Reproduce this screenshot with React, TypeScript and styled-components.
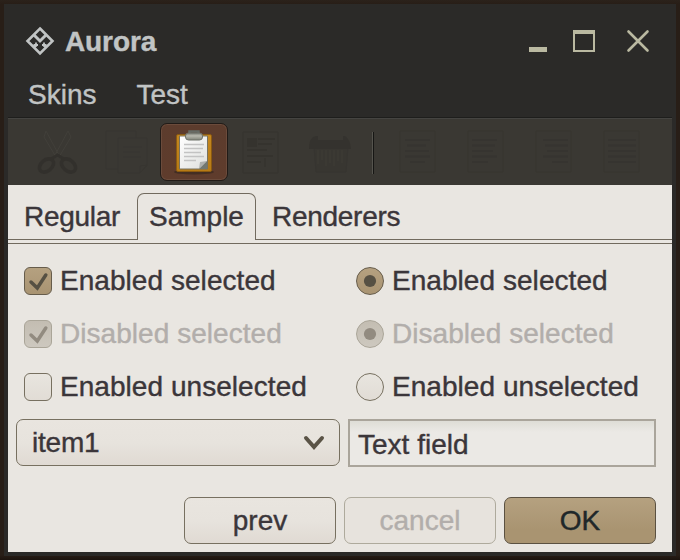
import React from 'react';
import styled, { createGlobalStyle, css } from 'styled-components';

const GlobalStyle = createGlobalStyle`
  * { box-sizing: border-box; }
  body { margin: 0; background: #2a1f19; }
`;

const Window = styled.div`
  width: 680px;
  height: 560px;
  overflow: hidden;
  display: flex;
  flex-direction: column;
  padding: 4px;
  background: linear-gradient(#2b221b, #281e17 4px, #281e17 555px, #1c130e);
  font: 28px/32px "Liberation Sans", Arial, sans-serif;
  color: #3b363a;
  -webkit-text-stroke: 0.4px currentColor;
`;

const Frame = styled.div`
  flex: 1;
  display: flex;
  flex-direction: column;
  padding: 0 4px 4px;
  background: #2b2a28;
`;

const TitleBar = styled.header`
  height: 74px;
  display: flex;
  align-items: center;
  padding: 0 20px 0 17px;
  color: #c1c4c4;
`;

const Title = styled.h1`
  flex: 1;
  margin: 1px 0 0 10px;
  font-size: 28px;
  line-height: 32px;
  letter-spacing: -0.1px;
`;

const WindowButtons = styled.svg`
  width: 126px;
  height: 32px;
  display: block;
`;

const MenuBar = styled.nav`
  height: 39px;
  display: flex;
  gap: 40px;
  padding: 1px 0 0 20px;
  color: #c1c4c4;
`;

const MenuItem = styled.span`
  white-space: nowrap;
`;

const Toolbar = styled.div`
  height: 68px;
  padding: 4px 16px 0;
  display: flex;
  align-items: center;
  border-top: 1px solid #1e1e1c;
  box-shadow: inset 0 1px #454441;
  background: #3a3833;
`;

const Tool = styled.button<{ $active?: boolean }>`
  flex: 0 0 68px;
  height: 58px;
  margin-top: -4px;
  padding: 0;
  display: flex;
  align-items: center;
  justify-content: center;
  background: none;
  border: 1px solid transparent;
  border-radius: 7px;
  svg {
    display: block;
    width: 48px;
    height: 48px;
    flex: none;
    opacity: ${p => (p.$active ? 1 : 0.7)};
  }
  ${p => p.$active && css`
    background: linear-gradient(#5c3c2d, #5f3c2c);
    border-color: #211b17;
    box-shadow: inset 0 0 0 1px #6b4b3b;
  `}
`;

const Separator = styled.div`
  flex: 0 0 2px;
  height: 42px;
  margin: -1px 10px 0 8px;
  background: linear-gradient(90deg, #55544e 50%, #161614 50%);
`;

const Content = styled.main`
  flex: 1;
  display: flex;
  flex-direction: column;
  background: #e9e6e1;
`;

const Tabs = styled.div`
  height: 59px;
  display: flex;
  padding-top: 8px;
  border-bottom: 1px solid #716a5e;
`;

const Tab = styled.div<{ $width: number; $selected?: boolean; $grow?: boolean }>`
  width: ${p => p.$width}px;
  flex: ${p => (p.$grow ? '1' : 'none')};
  height: 47px;
  padding: ${p => (p.$selected ? '7px 0 0 11px' : '8px 0 0 16px')};
  white-space: nowrap;
  letter-spacing: ${p => (p.$selected ? '0' : '-0.28px')};
  border: 0 solid #716a5e;
  border-width: ${p => (p.$selected ? '1px 1px 0' : '0 0 1px')};
  border-radius: ${p => (p.$selected ? '7px 7px 0 0' : '0')};
`;

const Options = styled.div`
  display: grid;
  grid-template-columns: 332px 1fr;
  grid-auto-rows: 53px;
  padding: 10px 0 0 16px;
  height: 175px;
`;

const Option = styled.label<{ $disabled?: boolean }>`
  display: flex;
  align-items: center;
  gap: 8px;
  white-space: nowrap;
  letter-spacing: 0.05px;
  color: ${p => (p.$disabled ? '#b2aeab' : 'inherit')};
`;

const Mark = styled.span<{ $round?: boolean; $state: State }>`
  width: 28px;
  height: 28px;
  display: flex;
  border: 1px solid;
  border-radius: ${p => (p.$round ? '50%' : '6px')};
  ${p => p.$state === 'selected' && css`
    color: #565043;
    border-color: #665c4b;
    background: linear-gradient(#b5a180, #a99472);
  `}
  ${p => p.$state === 'disabled' && css`
    color: #928b80;
    border-color: #aaa598;
    background: linear-gradient(#c3bdb2, #cdc8bf);
  `}
  ${p => p.$state === 'unselected' && css`
    border-color: #777060;
    background: linear-gradient(#e8e5df, #e1dcd5);
  `}
  svg { display: block; width: 26px; height: 26px; }
`;

const Fields = styled.div`
  display: flex;
  gap: 8px;
  padding: 0 16px 0 8px;
`;

const Combo = styled.div`
  width: 324px;
  height: 47px;
  display: flex;
  align-items: center;
  justify-content: space-between;
  padding: 0 14px 0 15px;
  letter-spacing: -0.2px;
  border: 1px solid #777060;
  border-radius: 7px;
  background: linear-gradient(#e9e5df, #e7e3dd 50%, #e0dad3);
  svg { display: block; }
`;

const TextField = styled.div`
  flex: 1;
  height: 48px;
  padding: 8px 0 0 8px;
  border: 2px solid #aaa59b;
  background: linear-gradient(#deddd6, #ebe9e5 11px);
`;

const Buttons = styled.footer`
  margin-top: 30px;
  padding-right: 16px;
  display: flex;
  justify-content: flex-end;
  gap: 8px;
`;

const Button = styled.button<{ $primary?: boolean }>`
  width: 152px;
  height: 47px;
  padding: 0;
  font: inherit;
  -webkit-text-stroke: inherit;
  color: #3b363a;
  border: 1px solid #777060;
  border-radius: 7px;
  background: linear-gradient(#e9e5df, #e7e3dd 50%, #e0dad3);
  &:disabled {
    color: #b2aeab;
    border-color: #aeaa9c;
    background: #e7e3dd;
  }
  ${p => p.$primary && css`
    color: #202729;
    border-color: #5b5141;
    background: linear-gradient(#b5a180, #a99471 70%);
  `}
`;

type State = 'selected' | 'disabled' | 'unselected';

const Logo = () => (
  <svg width="30" height="30" viewBox="0 0 30 30" fill="none" stroke="#c1c4c4">
    <path d="M15 2.5 27.5 15 15 27.5 2.5 15Z" strokeWidth="2.6" />
    <path d="m9 9 6 6 6-6" strokeWidth="3" />
    <path d="m9 21 2.2-2.2M21 21l-2.2-2.2" strokeWidth="3" />
    <path d="M11 16.5v4M19 16.5v4M8.5 19H13M17 19h4.5" strokeWidth="1.8" />
  </svg>
);

const Scissors = () => (
  <svg viewBox="0 0 48 48" fill="none" stroke="#302e2a">
    <path d="m12 3 14 26M34 3 20 29M12 3l-2 6 12 20M34 3l3 6-12 20" stroke="#45433d" />
    <ellipse cx="12.500" cy="37.500" rx="8" ry="5.500" strokeWidth="3.6" transform="rotate(-40 12.500 37.500)" />
    <ellipse cx="34.500" cy="37.500" rx="8" ry="5.500" strokeWidth="3.6" transform="rotate(40 34.500 37.500)" />
    <path d="m17 31 6.500-4 6.500 4" strokeWidth="3" />
  </svg>
);

const Copy = () => (
  <svg viewBox="0 0 48 48" fill="#3b3934" stroke="#373530">
    <path d="M4 3h30v38H4z" />
    <path d="M16 10h29v27l-7 8H16z" />
    <path d="M21 19h19M21 24h17M21 29h18M45 37l-7 8v-7z" />
  </svg>
);

const Page = ({ lines }: { lines: [number, number][] }) => (
  <svg viewBox="0 0 48 48" fill="none">
    <path d="M6 3h35v41H6z" fill="#3b3934" stroke="#37352f" />
    {lines.map(([x, end], i) => (
      <path key={i} d={`M${x} ${12 + i * 5.5}H${end}`} stroke="#35332f" strokeWidth="2" />
    ))}
  </svg>
);

const SelectAll = () => (
  <svg viewBox="0 0 48 48" fill="none">
    <path d="M5 4h35v41H5z" fill="#3a3833" stroke="#35332f" />
    <path d="M9 10h10v9H9z" fill="#33312d" />
    <path d="M20 11h17M20 16h14M9 22h20M9 28h26M9 34h14" stroke="#34322d" strokeWidth="2" />
    <path d="M27 30v9" stroke="#302f2b" />
  </svg>
);

const Shredder = () => (
  <svg viewBox="0 0 48 48">
    <path d="M8 19h34l-2 25H10z" fill="#383631" stroke="#353330" />
    <path d="M3 21q0-12 7-13h29q5 3 6 13z" fill="#32302c" />
    <path d="M12 3h25v9H12z" fill="#3b3934" />
    <path d="M12 22v14m4-14v10m4-10v16m4-16v13m4-13v16m4-16v11m4-11v13" stroke="#413f39" />
  </svg>
);

const Paste = () => (
  <svg viewBox="0 0 48 48">
    <defs>
      <linearGradient id="board" x2="0" y2="1">
        <stop stopColor="#c4871f" /><stop offset="1" stopColor="#b77b15" />
      </linearGradient>
      <linearGradient id="paper" x2="1" y2="1">
        <stop stopColor="#fff" /><stop offset="1" stopColor="#dedfdd" />
      </linearGradient>
      <linearGradient id="clip" x2="0" y2="1">
        <stop stopColor="#777971" /><stop offset=".4" stopColor="#b8b9af" /><stop offset="1" stopColor="#818479" />
      </linearGradient>
    </defs>
    <ellipse cx="24" cy="44" rx="20" ry="2.5" fill="#32251c" opacity=".6" />
    <rect x="6.5" y="6.5" width="35" height="37" rx="1.5" fill="url(#board)" stroke="#8b5a11" />
    <path d="M9.5 8h28v33h-28z" fill="url(#paper)" stroke="#787260" />
    <path d="M14 16.5h20M14 20.5h19M14 24.5h17M14 28.5h20M14 32.5h12" stroke="#c3c3c3" strokeWidth="1.6" />
    <path d="m29 41 1-7 7-1z" fill="#aeb0ad" /><path d="m29 41 8-8v8z" fill="#727871" />
    <path d="M19.5 5V3.5h9V5" fill="none" stroke="#666b65" strokeWidth="2.5" />
    <rect x="15.5" y="5" width="17" height="7" rx="3" fill="url(#clip)" stroke="#6f726a" />
  </svg>
);

const MarkIcon = ({ state, round }: { state: State; round?: boolean }) => (
  <Mark $state={state} $round={round}>
    {state !== 'unselected' && (
      <svg viewBox="0 0 26 26" fill="none">
        {round
          ? <circle cx="13" cy="13" r="6.1" fill="currentColor" />
          : <path d="m6 14 6.3 6L20.8 7" stroke="currentColor" strokeWidth="3.5" strokeLinecap="round" />}
      </svg>
    )}
  </Mark>
);

const options: { text: string; state: State }[] = [
  { text: 'Enabled selected', state: 'selected' },
  { text: 'Disabled selected', state: 'disabled' },
  { text: 'Enabled unselected', state: 'unselected' },
];

export default function App() {
  return (
    <>
      <GlobalStyle />
      <Window>
        <Frame>
          <TitleBar>
            <Logo />
            <Title>Aurora</Title>
            <WindowButtons viewBox="0 0 126 32" fill="#bab9a1">
              <path d="M3 22h18v5H3z" />
              <path fillRule="evenodd" d="M47 5h22v22H47zM49 9v16h18V9z" />
              <path d="m102.5 6.5 19 19m0-19-19 19" stroke="#bab9a1" strokeWidth="2.6" strokeLinecap="round" />
            </WindowButtons>
          </TitleBar>
          <MenuBar>
            <MenuItem>Skins</MenuItem>
            <MenuItem>Test</MenuItem>
          </MenuBar>
          <Toolbar>
            <Tool><Scissors /></Tool>
            <Tool><Copy /></Tool>
            <Tool $active><Paste /></Tool>
            <Tool><SelectAll /></Tool>
            <Tool><Shredder /></Tool>
            <Separator />
            <Tool><Page lines={[[11, 36], [13, 32], [11, 35], [11, 36], [16, 31]]} /></Tool>
            <Tool><Page lines={[[10, 35], [10, 33], [10, 31], [10, 35], [10, 26]]} /></Tool>
            <Tool><Page lines={[[13, 38], [15, 38], [17, 38], [13, 38], [22, 38]]} /></Tool>
            <Tool><Page lines={[[10, 38], [10, 38], [10, 38], [10, 38], [10, 38]]} /></Tool>
          </Toolbar>
          <Content>
            <Tabs>
              <Tab $width={129}>Regular</Tab>
              <Tab $width={119} $selected>Sample</Tab>
              <Tab $width={416} $grow>Renderers</Tab>
            </Tabs>
            <Options>
              {options.map(({ text, state }) => (
                <React.Fragment key={state}>
                  <Option $disabled={state === 'disabled'}><MarkIcon state={state} />{text}</Option>
                  <Option $disabled={state === 'disabled'}><MarkIcon state={state} round />{text}</Option>
                </React.Fragment>
              ))}
            </Options>
            <Fields>
              <Combo>
                item1
                <svg width="22" height="16" viewBox="0 0 22 16" fill="none">
                  <path d="m3 3 8 9 8-9" stroke="#5a5346" strokeWidth="4" strokeLinecap="round" />
                </svg>
              </Combo>
              <TextField>Text field</TextField>
            </Fields>
            <Buttons>
              <Button>prev</Button>
              <Button disabled>cancel</Button>
              <Button $primary>OK</Button>
            </Buttons>
          </Content>
        </Frame>
      </Window>
    </>
  );
}
